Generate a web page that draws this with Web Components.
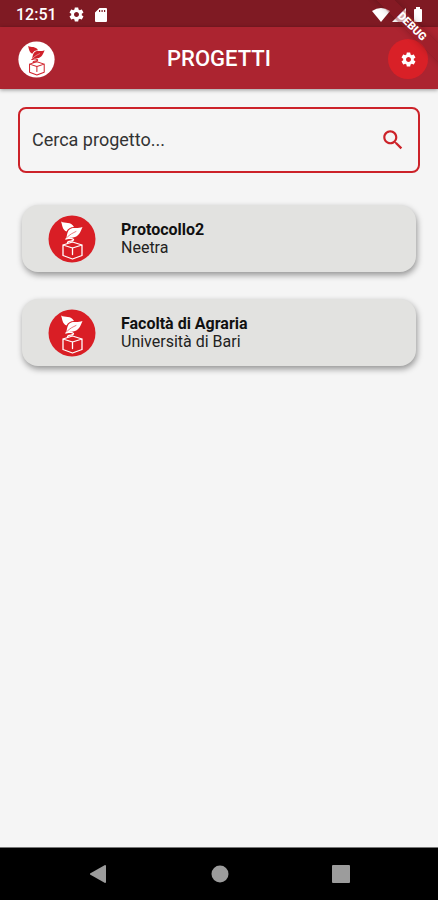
<!DOCTYPE html>
<html lang="it">
<head>
<meta charset="utf-8">
<meta name="viewport" content="width=device-width, initial-scale=1">
<title>Progetti</title>
<style>
  html, body { margin: 0; }
  body { font-family: Roboto, "Liberation Sans", sans-serif; color: #1c1c1c; background: #f5f5f5; }
</style>
</head>
<body>
<app-screen>
  <status-bar slot="status" time="12:51"></status-bar>
  <app-bar slot="header">PROGETTI</app-bar>
  <search-field placeholder="Cerca progetto..."></search-field>
  <project-list>
    <project-card name="Protocollo2" owner="Neetra"></project-card>
    <project-card name="Facoltà di Agraria" owner="Università di Bari"></project-card>
  </project-list>
  <debug-ribbon slot="overlay">DEBUG</debug-ribbon>
  <nav-bar slot="footer"></nav-bar>
</app-screen>
<script>
const GEAR = '<path fill="currentColor" d="M19.43 12.98c.04-.32.07-.64.07-.98s-.03-.66-.07-.98l2.11-1.65c.19-.15.24-.42.12-.64l-2-3.46c-.12-.22-.39-.3-.61-.22l-2.49 1c-.52-.4-1.08-.73-1.69-.98l-.38-2.65C14.46 2.18 14.25 2 14 2h-4c-.25 0-.46.18-.49.42l-.38 2.65c-.61.25-1.17.59-1.69.98l-2.49-1c-.23-.09-.49 0-.61.22l-2 3.46c-.13.22-.07.49.12.64l2.11 1.65c-.04.32-.07.65-.07.98s.03.66.07.98l-2.11 1.65c-.19.15-.24.42-.12.64l2 3.46c.12.22.39.3.61.22l2.49-1c.52.4 1.08.73 1.69.98l.38 2.65c.03.24.24.42.49.42h4c.25 0 .46-.18.49-.42l.38-2.65c.61-.25 1.17-.59 1.69-.98l2.49 1c.23.09.49 0 .61-.22l2-3.46c.12-.22.07-.49-.12-.64l-2.11-1.65zM12 15.5c-1.93 0-3.5-1.57-3.5-3.5s1.57-3.5 3.5-3.5 3.5 1.57 3.5 3.5-1.57 3.5-3.5 3.5z"/>';

class Base extends HTMLElement {
  connectedCallback() {
    if (!this.shadowRoot) this.attachShadow({ mode: 'open' }).innerHTML = this.view();
  }
}

customElements.define('app-screen', class extends Base {
  view() { return `<style>
    :host { display: flex; flex-direction: column; min-height: 100vh; position: relative; }
    main { flex: 1; display: flex; flex-direction: column; gap: 32px; padding: 18px; }
  </style>
  <slot name="status"></slot><slot name="header"></slot>
  <main><slot></slot></main>
  <slot name="footer"></slot><slot name="overlay"></slot>`; }
});

customElements.define('status-bar', class extends Base {
  view() { return `<style>
    :host { display: flex; align-items: center; box-sizing: border-box; height: 27px; padding: 2px 15px 0 16px; background: #7f1a23; color: #fff;
            font-size: 16px; font-weight: 500; }
    time { margin-right: 11px; }
    svg { display: block; }
    .sd { margin-left: 9px; }
    .right { display: flex; align-items: center; gap: 2px; margin-left: auto; }
    .battery { margin-left: 5px; }
  </style>
  <time>${this.getAttribute('time')}</time>
  <svg width="17" height="17" viewBox="0 0 24 24">${GEAR}</svg>
  <svg class="sd" width="14" height="16" viewBox="0 0 14 16"><path fill="#fff" fill-rule="evenodd" d="M5.500 1H12q1 0 1 1v12q0 1-1 1H2q-1 0-1-1V5.500zM5 3v2h1.200V3zM7.500 3v2h1.200V3zM10 3v2h1.200V3z"/></svg>
  <div class="right">
    <svg width="18" height="16" viewBox="0 0 18 16"><path fill="#fff" d="M0 4Q9-2 18 4L9 15z"/></svg>
    <svg width="14" height="16" viewBox="0 0 14 16"><path fill="#fff" d="M14 1v14H0z"/></svg>
    <svg class="battery" width="10" height="16" viewBox="0 0 10 16"><path fill="#fff" d="M3 0h4v2h1q1 0 1 1v11q0 1-1 1H2q-1 0-1-1V3q0-1 1-1h1z"/></svg>
  </div>`; }
});

customElements.define('brand-logo', class extends Base {
  view() { return `<style>
    :host { display: block; width: 48px; height: 48px; --disc: #d91e25; --ink: #fff; }
    :host([small]) { width: 37px; height: 37px; --disc: #fff; --ink: #d0202a; }
    svg { display: block; width: 100%; height: 100%; }
  </style>
  <svg viewBox="0 0 48 48" aria-hidden="true">
    <circle cx="24" cy="24" r="23.500" fill="var(--disc)"/>
    <g fill="var(--ink)">
      <path d="M13 6.500C17 9 23 6 26 12C22.500 12 20 13.500 18.500 16.500C14 14.500 14.500 10 13 6.500Z"/>
      <path d="M34.500 12C28 14.500 24 11 20.500 15.500C18.500 18.500 19.500 21 17.500 24.500C21 22.500 22 23 25 22.500C31 21.500 32.500 17 34.500 12Z"/>
    </g>
    <g fill="none" stroke-linejoin="round" stroke-linecap="round">
      <path stroke="var(--disc)" stroke-width=".6" d="M18.500 23C22 19 25 18 28 16.500"/>
      <path stroke="var(--ink)" stroke-width="1.300" d="M18 24C20 22.500 26 23.500 25.500 25C25 26.500 19 25.500 19.500 28M15 30L24.500 27L34 30L24.500 33ZM15 30V40.500L24.500 44L34 40.500V30M24.500 33V39.500"/>
    </g>
  </svg>`; }
});

customElements.define('app-bar', class extends Base {
  view() { return `<style>
    :host { display: grid; grid-template-columns: 1fr auto 1fr; align-items: center; box-sizing: border-box; height: 62px; padding: 2px 10px 0;
            background: #ac2430; color: #fff; box-shadow: 0 1px 4px #0006; }
    brand-logo { margin-left: 8px; }
    h1 { margin: 0; font-size: 22px; line-height: 28px; font-weight: 500; text-align: center; }
    button { display: grid; place-items: center; justify-self: end; width: 40px; height: 40px; padding: 0; border: 0; border-radius: 50%;
             background: #d92027; color: #fff; }
    svg { display: block; }
  </style>
  <brand-logo small></brand-logo><h1><slot></slot></h1>
  <button type="button" aria-label="Impostazioni"><svg width="17" height="17" viewBox="0 0 24 24">${GEAR}</svg></button>`; }
});

customElements.define('search-field', class extends Base {
  view() { return `<style>
    :host { display: block; }
    form { display: flex; align-items: center; box-sizing: border-box; height: 66px; padding: 0 12px;
           border: 2px solid #cc2229; border-radius: 8px; }
    input { flex: 1; min-width: 0; padding: 0; border: 0; outline: 0; background: none; font: 400 18px/24px Roboto, "Liberation Sans", sans-serif; color: #1c1c1c; }
    input::placeholder { color: #333; opacity: 1; }
    button { display: grid; place-items: center; padding: 0; border: 0; background: none; color: #cc2229; }
    svg { display: block; }
  </style>
  <form role="search">
    <input type="text" aria-label="Cerca progetto" placeholder="${this.getAttribute('placeholder')}">
    <button type="button" aria-label="Cerca"><svg width="26" height="26" viewBox="0 0 24 24"><path fill="currentColor" d="M15.500 14h-.79l-.28-.27C15.410 12.590 16 11.110 16 9.500 16 5.910 13.090 3 9.500 3S3 5.910 3 9.500 5.910 16 9.500 16c1.610 0 3.090-.59 4.230-1.570l.27.28v.79l5 4.990L20.490 19l-4.990-5zm-6 0C7.010 14 5 11.990 5 9.500S7.010 5 9.500 5 14 7.010 14 9.500 11.990 14 9.500 14z"/></svg></button>
  </form>`; }
});

customElements.define('project-list', class extends Base {
  view() { return `<style>
    :host { display: flex; flex-direction: column; gap: 27px; padding: 0 4px; }
  </style><slot></slot>`; }
});

customElements.define('project-card', class extends Base {
  view() { return `<style>
    :host { display: block; }
    button { display: flex; align-items: center; gap: 25px; width: 100%; height: 67px; padding: 0 26px; border: 0; border-radius: 16px;
             background: #e2e2e0; color: #222; font: 400 16px/18px Roboto, "Liberation Sans", sans-serif; text-align: left;
             box-shadow: 1px 3px 6px #0006; }
    .text { display: flex; flex-direction: column; }
    strong { font-weight: 700; color: #111; }
  </style>
  <button type="button"><brand-logo></brand-logo>
    <span class="text"><strong>${this.getAttribute('name')}</strong><span>${this.getAttribute('owner')}</span></span>
  </button>`; }
});

customElements.define('debug-ribbon', class extends Base {
  view() { return `<style>
    :host { position: absolute; top: 0; right: 0; width: 80px; height: 80px; overflow: hidden; pointer-events: none; }
    span { position: absolute; top: 20px; right: -34px; width: 120px; transform: rotate(45deg); text-align: center;
           font-size: 11px; line-height: 13px; font-weight: 900; color: #fff; background: #8f1c2566; box-shadow: 0 0 6px #0003; }
  </style><span><slot></slot></span>`; }
});

customElements.define('nav-bar', class extends Base {
  view() { return `<style>
    :host { display: block; background: #000; border-top: 1px solid #777; }
    nav { display: flex; justify-content: space-between; align-items: center; height: 52px; padding: 0 20%; }
    button { display: block; padding: 0; border: 0; background: none; color: #9c9c9c; }
    svg { display: block; }
  </style>
  <nav>
    <button type="button" aria-label="Indietro"><svg width="20" height="20" viewBox="0 0 20 20"><path fill="currentColor" d="M17 1q1 0 1 1v16q0 1-1 1L2 10.500v-1z"/></svg></button>
    <button type="button" aria-label="Home"><svg width="18" height="18" viewBox="0 0 18 18"><circle cx="9" cy="9" r="8.500" fill="currentColor"/></svg></button>
    <button type="button" aria-label="Recenti"><svg width="18" height="18" viewBox="0 0 18 18"><rect width="18" height="18" rx="1" fill="currentColor"/></svg></button>
  </nav>`; }
});
</script>
</body>
</html>
